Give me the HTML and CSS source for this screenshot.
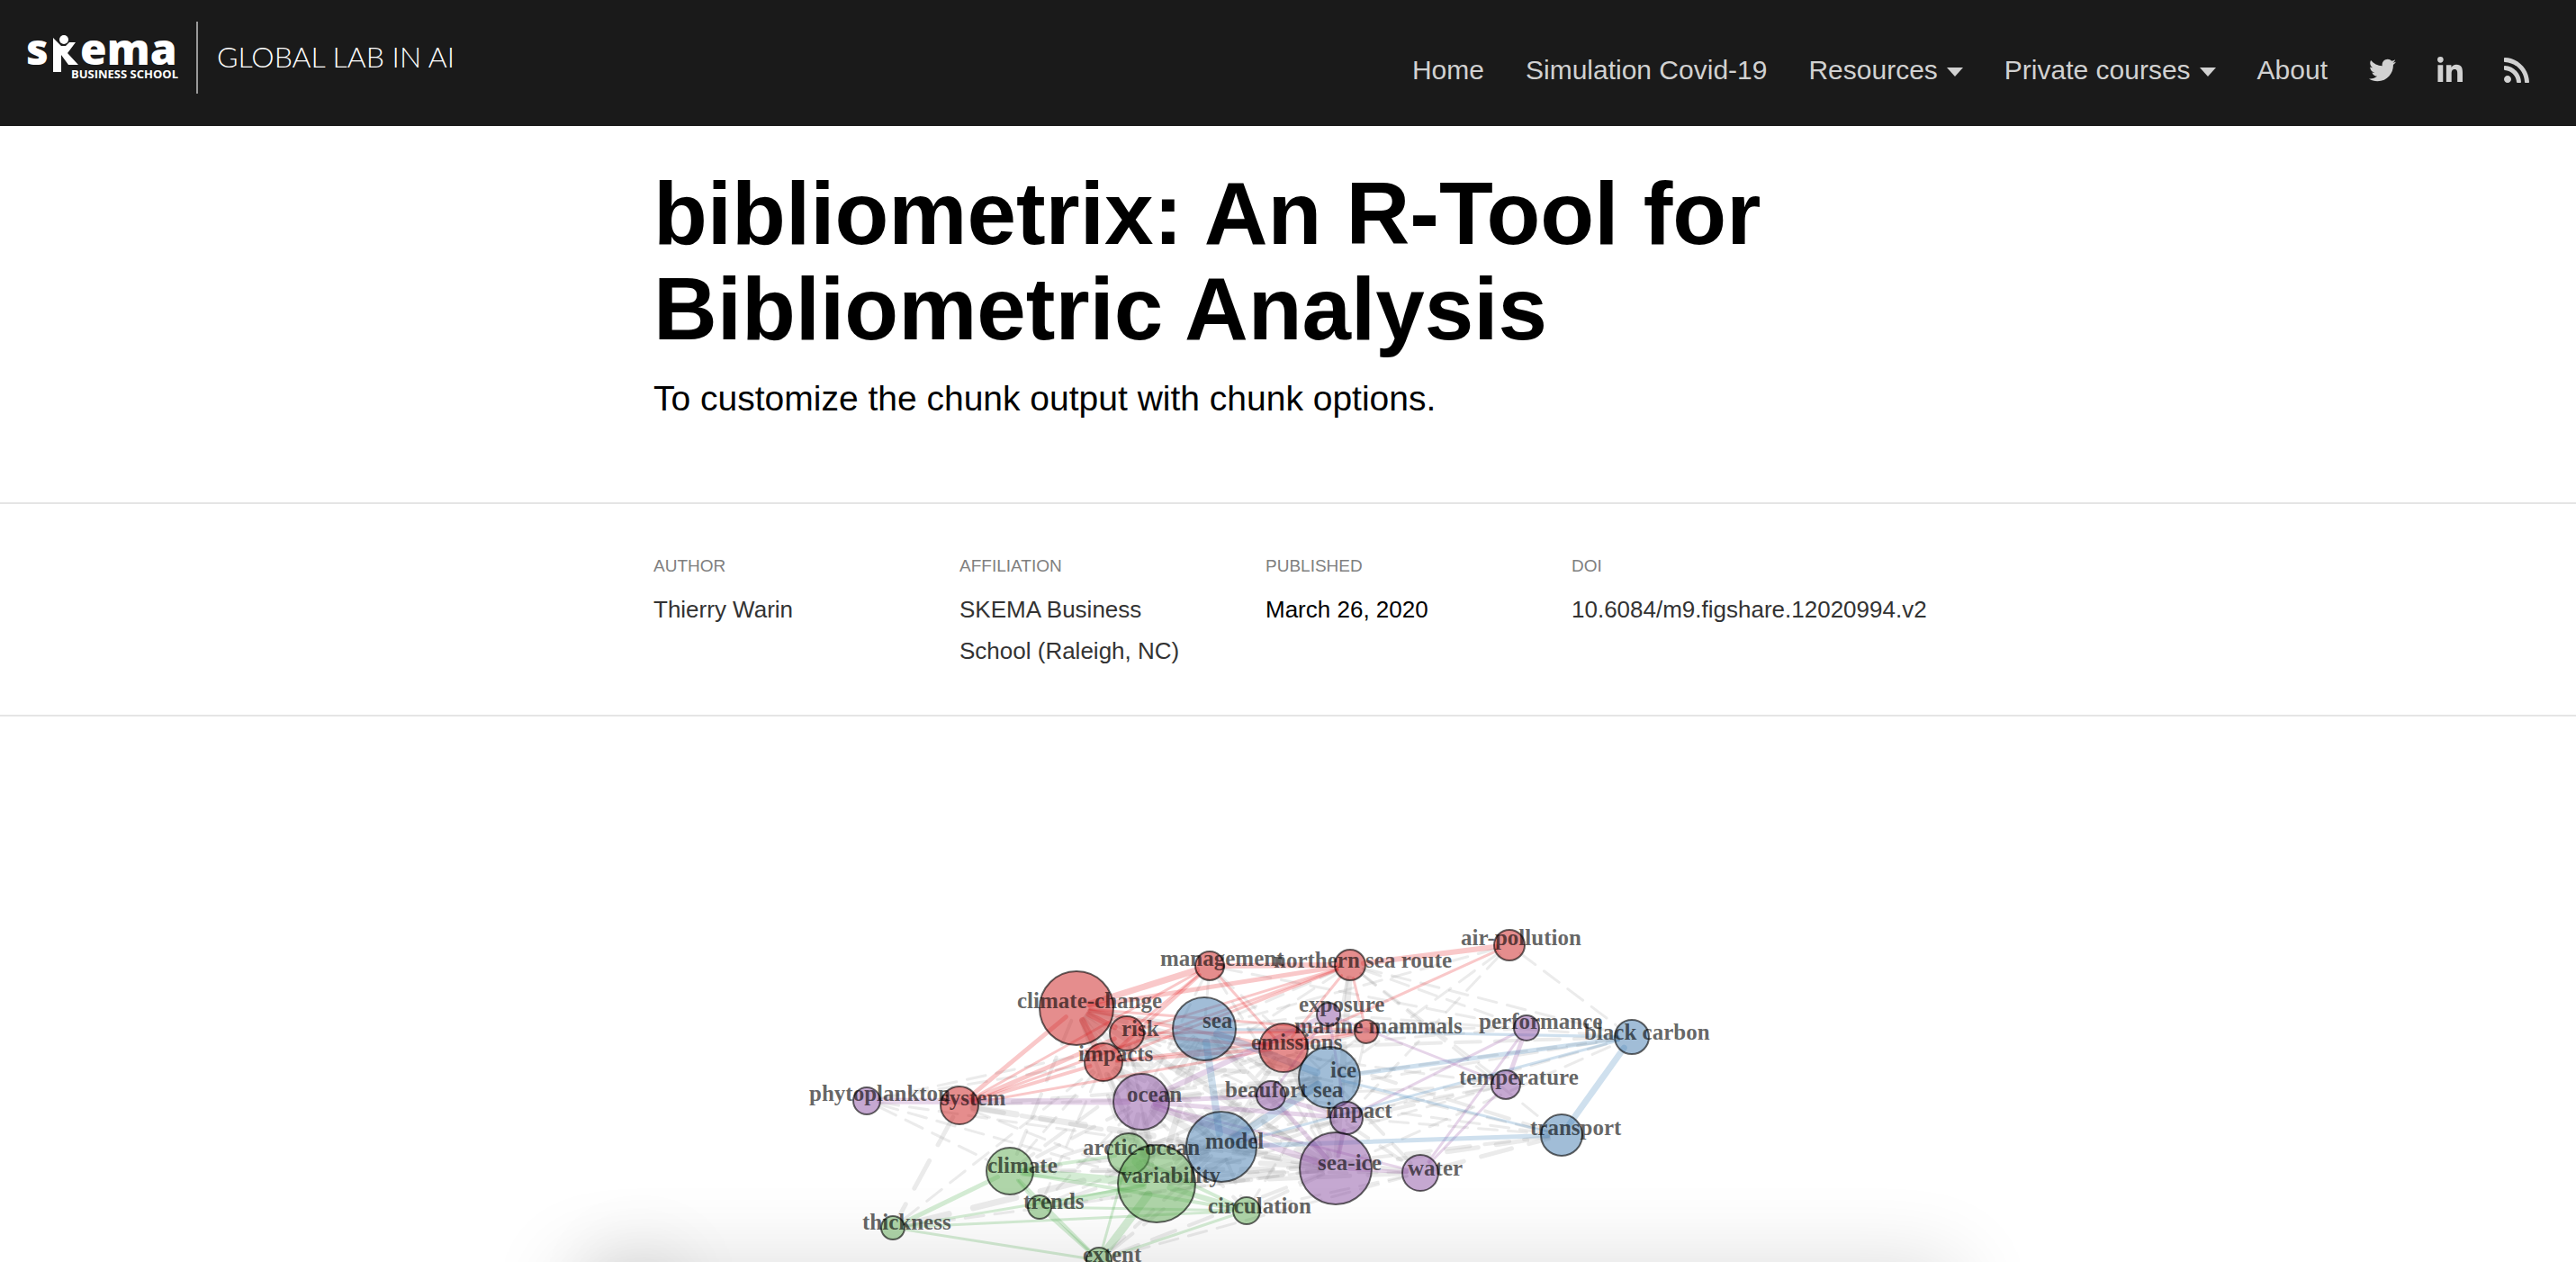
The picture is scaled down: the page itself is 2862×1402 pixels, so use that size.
FILE: index.html
```html
<!DOCTYPE html>
<html lang="en">
<head>
<meta charset="utf-8">
<meta name="viewport" content="width=device-width, initial-scale=1">
<title>bibliometrix: An R-Tool for Bibliometric Analysis</title>
<link rel="stylesheet" href="styles.css">
</head>
<body>
<header class="site-header">
  <a class="brand" href="#" aria-label="SKEMA Business School, Global Lab in AI">
    <svg class="brand-logo" width="520" height="140" viewBox="0 0 520 140">
      <text class="logo-word" x="29" y="72">s</text>
      <text class="logo-word" x="89" y="72">ema</text>
      <circle cx="71" cy="44" r="5"/>
      <path d="M59 42l9 9h5l4-4h7l-9 12 12 13H76l-8-11v19h-9z"/>
      <text class="logo-sub" x="79" y="87">BUSINESS SCHOOL</text>
      <rect class="logo-rule" x="218" y="24" width="2" height="80"/>
      <text class="logo-lab" x="241" y="75">GLOBAL LAB IN AI</text>
    </svg>
  </a>
  <nav class="site-nav" aria-label="Main">
    <a href="#">Home</a>
    <a href="#">Simulation Covid-19</a>
    <button type="button">Resources<span class="caret"></span></button>
    <button type="button">Private courses<span class="caret"></span></button>
    <a href="#">About</a>
    <a class="icon" href="#" aria-label="Twitter"><svg width="30" height="30" viewBox="0 0 512 512"><path d="M459.37 151.716c.325 4.548.325 9.097.325 13.645 0 138.72-105.583 298.558-298.558 298.558-59.452 0-114.68-17.219-161.137-47.106 8.447.974 16.568 1.299 25.34 1.299 49.055 0 94.213-16.568 130.274-44.832-46.132-.975-84.792-31.188-98.112-72.772 6.498.974 12.995 1.624 19.818 1.624 9.421 0 18.843-1.3 27.614-3.573-48.081-9.747-84.143-51.98-84.143-102.985v-1.299c13.969 7.797 30.214 12.67 47.431 13.319-28.264-18.843-46.781-51.005-46.781-87.391 0-19.492 5.197-37.36 14.294-52.954 51.655 63.675 129.3 105.258 216.365 109.807-1.624-7.797-2.599-15.918-2.599-24.04 0-57.828 46.782-104.934 104.934-104.934 30.213 0 57.502 12.67 76.67 33.137 23.715-4.548 46.456-13.32 66.599-25.34-7.798 24.366-24.366 44.833-46.132 57.827 21.117-2.273 41.584-8.122 60.426-16.243-14.292 20.791-32.161 39.308-52.628 54.253z"/></svg></a>
    <a class="icon" href="#" aria-label="LinkedIn"><svg width="28" height="30" viewBox="0 0 448 480"><path d="M100.28 448H7.4V148.9h92.88zM53.79 108.1C24.09 108.1 0 83.5 0 53.8a53.79 53.79 0 0 1 107.58 0c0 29.7-24.1 54.3-53.79 54.3zM447.9 448h-92.68V302.4c0-34.7-.7-79.2-48.29-79.2-48.29 0-55.69 37.7-55.69 76.7V448h-92.78V148.9h89.08v40.8h1.3c12.4-23.5 42.69-48.3 87.88-48.3 94 0 111.28 61.9 111.28 142.3V448z"/></svg></a>
    <a class="icon" href="#" aria-label="RSS"><svg width="28" height="30" viewBox="0 16 448 480"><path d="M128.081 415.959c0 35.369-28.672 64.041-64.041 64.041S0 451.328 0 415.959s28.672-64.041 64.041-64.041 64.04 28.673 64.04 64.041zm175.66 47.25c-8.354-154.6-132.185-278.587-286.95-286.95C7.656 175.765 0 183.105 0 192.253v48.069c0 8.415 6.49 15.472 14.887 16.018 111.832 7.284 201.473 96.702 208.772 208.772.547 8.397 7.604 14.887 16.018 14.887h48.069c9.149.001 16.489-7.655 15.995-16.79zm144.249.288C439.596 229.677 251.465 40.445 16.503 32.01 7.473 31.686 0 38.981 0 48.016v48.068c0 8.625 6.835 15.645 15.453 15.999 191.179 7.839 344.627 161.316 352.465 352.465.353 8.618 7.373 15.453 15.999 15.453h48.068c9.034-.001 16.329-7.474 16.005-16.504z"/></svg></a>
  </nav>
</header>
<main class="article">
  <section class="title-block">
    <h1>bibliometrix: An R-Tool for Bibliometric Analysis</h1>
    <p>To customize the chunk output with chunk options.</p>
  </section>
  <section class="byline">
    <dl>
      <div><dt>Author</dt><dd>Thierry Warin</dd></div>
      <div><dt>Affiliation</dt><dd>SKEMA Business School (Raleigh, NC)</dd></div>
      <div><dt>Published</dt><dd class="date">March 26, 2020</dd></div>
      <div><dt>DOI</dt><dd class="doi">10.6084/m9.figshare.12020994.v2</dd></div>
    </dl>
  </section>
  <figure class="network">
    <svg id="graph" viewBox="726 1000 1410 430" role="img" aria-label="Keyword co-occurrence network"></svg>
    <div class="shade"></div>
    <div class="shade-spot"></div>
  </figure>
</main>
<script src="network.js"></script>
</body>
</html>
```

FILE: styles.css
```css
* {
  box-sizing: border-box;
}

body {
  margin: 0;
  height: 100vh;
  display: flex;
  flex-direction: column;
  overflow: hidden;
  background: #fff;
  color: #000;
  font-family: "Liberation Sans", Arial, sans-serif;
}

.site-header {
  flex: none;
  display: flex;
  justify-content: space-between;
  align-items: center;
  height: 140px;
  padding-right: 52px;
  background: #1a1a1a;
}

.brand,
.brand-logo {
  display: block;
  fill: #fff;
}

.logo-word {
  font: 800 48px "Open Sans", sans-serif;
}

.logo-sub {
  font: 700 13px "Open Sans", sans-serif;
}

.logo-lab {
  font: 300 32px Lato, sans-serif;
}

.logo-rule {
  fill: #999;
}

.site-nav {
  display: flex;
  align-items: center;
  gap: 46px;
  padding-top: 16px;
}

.site-nav a,
.site-nav button {
  display: flex;
  align-items: center;
  padding: 0;
  border: 0;
  background: none;
  color: #d1d1d1;
  font: 30px/36px "Liberation Sans", Arial, sans-serif;
  text-decoration: none;
  white-space: nowrap;
  fill: #d1d1d1;
}

.caret {
  margin: 4px 0 0 10px;
  border: 9px solid transparent;
  border-top: 10px solid #d1d1d1;
  border-bottom: 0;
}

.article {
  flex: 1;
  min-height: 0;
  display: flex;
  flex-direction: column;
}

.title-block,
.byline dl {
  width: 100%;
  max-width: 1410px;
  margin: 0 auto;
}

.title-block {
  padding: 44px 0 88px;
}

h1 {
  margin: 0;
  font-size: 98px;
  line-height: 106px;
}

.title-block p {
  margin: 20px 0 0;
  font-size: 39px;
  line-height: 54px;
}

.byline {
  border: solid #e5e5e5;
  border-width: 2px 0;
  padding: 52px 0 48px;
}

.byline dl {
  display: grid;
  grid-template-columns: repeat(4, 280px);
  gap: 60px;
}

dt {
  color: #808080;
  font-size: 19px;
  line-height: 34px;
  text-transform: uppercase;
}

dd {
  margin: 8px 0 0;
  color: #333;
  font-size: 26px;
  line-height: 46px;
}

.date {
  color: #000;
}

.doi {
  white-space: nowrap;
}

.network {
  position: relative;
  flex: 1;
  min-height: 0;
  margin: 0;
  padding-top: 204px;
  overflow: hidden;
}

#graph {
  display: block;
  width: 100%;
  max-width: 1410px;
  margin: 0 auto;
}

#graph line {
  stroke-linecap: round;
}

#graph circle {
  fill-opacity: 0.5;
  stroke: #000;
  stroke-opacity: 0.6;
  stroke-width: 2px;
}

#graph text {
  fill: #000;
  fill-opacity: 0.62;
  font: 700 25px "Liberation Serif", "Times New Roman", serif;
}

.shade,
.shade-spot {
  position: absolute;
  top: 100%;
  height: 200px;
}

.shade {
  left: 22%;
  right: 24%;
  box-shadow: 0 0 90px rgba(0, 0, 0, 0.14);
}

.shade-spot {
  left: 24%;
  width: 50px;
  box-shadow: 0 0 90px rgba(0, 0, 0, 0.2);
}
```

FILE: network.js
```js
const COLORS = { red: "#e41a1c", blue: "#377eb8", green: "#4daf4a", purple: "#984ea3", gray: "#999" };
const FILLS = { red: "#cb1b1b", blue: "#437bb0", green: "#5fab53", purple: "#8b51a3" };

// key: [x, y, radius, color, label x, label y, label]
const NODES = {
  phyto: [963, 1223, 15, "purple", 899, 1223, "phytoplankton"],
  system: [1066, 1228, 21, "red", 1045, 1228, "system"],
  cc: [1196, 1120, 41, "red", 1130, 1120, "climate-change"],
  risk: [1252, 1148, 19, "red", 1246, 1151, "risk"],
  impacts: [1226, 1180, 21, "red", 1198, 1179, "impacts"],
  mgmt: [1344, 1073, 16, "red", 1289, 1073, "management"],
  sea: [1338, 1143, 35, "blue", 1336, 1142, "sea"],
  ocean: [1268, 1224, 31, "purple", 1252, 1224, "ocean"],
  climate: [1122, 1301, 26, "green", 1097, 1303, "climate"],
  arctic: [1254, 1282, 23, "green", 1203, 1283, "arctic-ocean"],
  model: [1357, 1274, 39, "blue", 1339, 1276, "model"],
  variab: [1285, 1315, 43, "green", 1245, 1314, "variability"],
  trends: [1155, 1341, 13, "green", 1137, 1343, "trends"],
  thick: [992, 1364, 13, "green", 958, 1366, "thickness"],
  extent: [1221, 1400, 14, "green", 1203, 1402, "extent"],
  north: [1500, 1072, 17, "red", 1415, 1075, "northern sea route"],
  emis: [1426, 1164, 27, "red", 1390, 1166, "emissions"],
  expo: [1476, 1127, 13, "purple", 1443, 1124, "exposure"],
  marine: [1518, 1146, 13, "red", 1438, 1148, "marine mammals"],
  ice: [1477, 1197, 34, "blue", 1478, 1197, "ice"],
  beau: [1412, 1217, 16, "purple", 1361, 1219, "beaufort sea"],
  impact: [1496, 1242, 18, "purple", 1473, 1242, "impact"],
  seaice: [1484, 1298, 40, "purple", 1464, 1300, "sea-ice"],
  water: [1578, 1303, 20, "purple", 1564, 1306, "water"],
  circ: [1385, 1345, 15, "green", 1342, 1348, "circulation"],
  air: [1677, 1050, 17, "red", 1623, 1050, "air-pollution"],
  perf: [1696, 1142, 14, "purple", 1643, 1143, "performance"],
  carbon: [1813, 1152, 19, "blue", 1760, 1155, "black carbon"],
  temp: [1673, 1205, 16, "purple", 1621, 1205, "temperature"],
  transp: [1735, 1261, 23, "blue", 1700, 1261, "transport"]
};

// "from to width" triples by color
const EDGES = {
  gray: "phyto impacts 3,phyto sea 3,phyto variab 3,phyto seaice 3,phyto climate 3,system model 7,system ice 4,system seaice 5,system thick 5,system beau 3,system variab 3,thick impacts 3,thick model 7,thick seaice 3,cc climate 4,cc ocean 6,cc model 7,cc variab 6,cc seaice 7,cc ice 6,cc beau 3,cc sea 5,cc arctic 4,impacts ocean 5,impacts model 5,impacts variab 4,impacts seaice 5,impacts ice 5,impacts climate 3,impacts trends 3,risk ice 4,risk model 4,risk ocean 4,risk seaice 5,risk arctic 3,risk variab 3,risk transp 3,risk temp 3,mgmt sea 3,mgmt ice 3,mgmt perf 3,mgmt seaice 3,mgmt ocean 3,north sea 3,north seaice 7,north perf 3,north carbon 3,north transp 3,north ocean 3,north ice 4,north temp 3,air ice 3,air impact 3,air carbon 3,air sea 3,emis carbon 4,emis model 5,emis seaice 5,emis transp 4,emis ocean 5,emis perf 3,emis variab 4,marine seaice 3,marine ocean 3,marine model 3,sea ocean 6,sea variab 7,sea seaice 7,sea arctic 6,sea beau 5,sea climate 4,sea perf 3,sea water 4,ocean ice 7,ocean model 7,ocean variab 7,ocean arctic 6,ocean climate 4,ocean trends 3,ocean circ 4,ocean carbon 3,arctic ice 6,arctic seaice 6,arctic beau 4,arctic temp 3,arctic model 6,variab seaice 7,variab model 7,variab ice 7,variab impact 4,variab beau 4,variab water 5,variab temp 3,variab transp 4,model seaice 7,model climate 5,model trends 4,model beau 5,model impact 4,model water 5,model temp 4,model circ 4,model extent 4,ice seaice 7,ice climate 4,ice circ 3,ice water 4,ice extent 4,ice trends 3,beau carbon 3,beau transp 3,seaice transp 5,seaice climate 5,seaice circ 4,seaice extent 4,seaice trends 4,seaice carbon 3,water transp 5,water climate 3,water circ 3,water extent 3,impact carbon 3,impact transp 3,expo carbon 3,expo sea 3,temp beau 3",
  red: "cc mgmt 7,cc north 5,cc emis 4,cc system 5,cc impacts 7,cc risk 6,cc marine 3,mgmt north 6,mgmt risk 3,mgmt impacts 4,mgmt system 3,mgmt emis 3,north risk 3,north impacts 3,north emis 3,north marine 3,north air 6,emis air 3,emis system 3,emis impacts 4,emis risk 4,emis marine 4,risk marine 3,impacts marine 3,system risk 5,system north 3,system impacts 4",
  purple: "phyto ocean 7,ocean expo 6,ocean beau 5,ocean impact 5,ocean seaice 7,ocean water 3,beau impact 5,beau seaice 5,beau expo 3,expo impact 3,expo temp 3,impact perf 3,impact seaice 5,seaice water 4,perf temp 5,perf water 3,temp water 3",
  blue: "sea model 8,sea ice 8,model ice 9,sea carbon 3,ice carbon 5,model carbon 3,ice transp 3,model transp 5,transp carbon 7",
  green: "thick climate 5,thick variab 3,thick circ 3,thick extent 3,climate arctic 4,climate variab 9,climate circ 4,climate extent 4,trends variab 7,trends circ 3,trends extent 4,trends climate 3,extent variab 9,extent circ 3,extent arctic 3,arctic circ 4,arctic variab 9,variab circ 6"
};

const svg = document.getElementById("graph");

function add(name, attrs, text) {
  const el = document.createElementNS("http://www.w3.org/2000/svg", name);
  for (const key in attrs) el.setAttribute(key, attrs[key]);
  if (text) el.textContent = text;
  svg.appendChild(el);
}

for (const color in EDGES) {
  for (const edge of EDGES[color].split(",")) {
    const [from, to, width] = edge.split(" ");
    const [x1, y1] = NODES[from];
    const [x2, y2] = NODES[to];
    const length = Math.hypot(x2 - x1, y2 - y1);
    const inset = Math.min(15, length / 4) / length;
    const dx = (x2 - x1) * inset;
    const dy = (y2 - y1) * inset;
    const attrs = {
      x1: x1 + dx, y1: y1 + dy, x2: x2 - dx, y2: y2 - dy,
      stroke: COLORS[color],
      "stroke-width": width,
      "stroke-opacity": color === "gray" ? 0.2 : 0.24
    };
    if (color === "gray") attrs["stroke-dasharray"] = width * 7 + " " + width * 4;
    add("line", attrs);
  }
}

for (const key in NODES) {
  const [cx, cy, r, color] = NODES[key];
  add("circle", { cx, cy, r, fill: FILLS[color] });
}

for (const key in NODES) {
  const [, , , , x, y, label] = NODES[key];
  add("text", { x, y }, label);
}
```
